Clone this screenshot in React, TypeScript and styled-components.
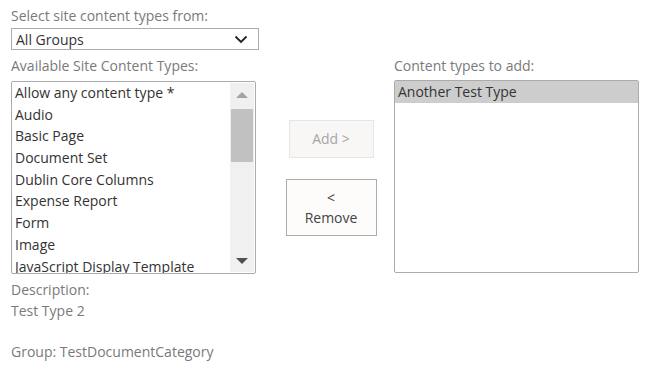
import {createGlobalStyle} from 'styled-components';
import styled from 'styled-components';

const GlobalStyle = createGlobalStyle`
  body {
    margin: 0;
    background: #ffffff;
    font-family: 'Open Sans', 'Noto Sans', sans-serif;
    font-size: 14px;
    color: #444444;
  }
`;

const availableTypes = [
  'Allow any content type *',
  'Audio',
  'Basic Page',
  'Document Set',
  'Dublin Core Columns',
  'Expense Report',
  'Form',
  'Image',
  'JavaScript Display Template',
];

const selectedTypes = ['Another Test Type'];

const Page = styled.div`
  padding: 5px 0 0 11px;
  width: 642px;
  box-sizing: border-box;
`;

const Label = styled.div`
  color: #7a7a7a;
  line-height: 21px;
`;

const Select = styled.div`
  width: 248px;
  height: 22px;
  box-sizing: border-box;
  border: 1px solid #ababab;
  margin-top: 2px;
  display: flex;
  align-items: center;
  justify-content: space-between;
  padding: 0 10px 0 4px;
  color: #333333;
`;

const Row = styled.div`
  display: flex;
  margin-top: 5px;
`;

const Column = styled.div`
  display: flex;
  flex-direction: column;
  width: 245px;
`;

const Middle = styled.div`
  width: 138px;
  box-sizing: border-box;
  display: flex;
  flex-direction: column;
  align-items: center;
  padding: 65px 0 0 12px;
  gap: 21px;
`;

const ListBox = styled.div<{$top: number}>`
  margin-top: ${({$top}) => $top}px;
  height: 193px;
  box-sizing: border-box;
  border: 1px solid #ababab;
  border-radius: 2px;
  display: flex;
  overflow: hidden;
`;

const Items = styled.div`
  flex: 1;
  min-width: 0;
`;

const Item = styled.div<{$selected?: boolean}>`
  height: 21.7px;
  line-height: 21px;
  padding-left: 3px;
  white-space: nowrap;
  color: #333333;
  background: ${({$selected}) => ($selected ? '#cdcdcd' : 'transparent')};
`;

const Scrollbar = styled.div`
  width: 24px;
  margin: 1px 1px 1px 0;
  background: #f0f0f0;
  display: flex;
  flex-direction: column;
  align-items: center;
`;

const Arrow = styled.div<{$down?: boolean}>`
  width: 0;
  height: 0;
  border-left: 6px solid transparent;
  border-right: 6px solid transparent;
  ${({$down}) => ($down ? 'border-top: 6px solid #505050;' : 'border-bottom: 6px solid #a3a3a3;')}
  margin: ${({$down}) => ($down ? 'auto 0 8px' : '9px 0 0')};
`;

const Thumb = styled.div`
  width: 22px;
  height: 53px;
  background: #c1c1c1;
  margin-top: 11px;
`;

const Button = styled.button<{$width: number; $height: number}>`
  width: ${({$width}) => $width}px;
  height: ${({$height}) => $height}px;
  font-family: inherit;
  font-size: 14px;
  line-height: 20px;
  background: #fdfcfb;
  border: 1px solid #ababab;
  color: #444444;
  padding: 0;
  margin: 0;

  &:disabled {
    background: #f8f7f6;
    border-color: #e6e6e6;
    color: #a6a6a6;
  }
`;

const Details = styled.div`
  margin-top: 5px;
  color: #7a7a7a;
  line-height: 21px;
`;

const Spacer = styled.div`
  height: 20px;
`;

const Chevron = () => (
  <svg width="14" height="9" viewBox="0 0 14 9">
    <path d="M1.5 1.5 L7 7 L12.5 1.5" fill="none" stroke="#222" strokeWidth="1.8" />
  </svg>
);

export default function App() {
  return (
    <>
      <GlobalStyle />
      <Page>
        <Label>Select site content types from:</Label>
        <Select>
          <span>All Groups</span>
          <Chevron />
        </Select>
        <Row>
          <Column>
            <Label>Available Site Content Types:</Label>
            <ListBox $top={5}>
              <Items>
                {availableTypes.map((t) => (
                  <Item key={t}>{t}</Item>
                ))}
              </Items>
              <Scrollbar>
                <Arrow />
                <Thumb />
                <Arrow $down />
              </Scrollbar>
            </ListBox>
          </Column>
          <Middle>
            <Button $width={85} $height={38} disabled>
              Add &gt;
            </Button>
            <Button $width={91} $height={57}>
              &lt;
              <br />
              Remove
            </Button>
          </Middle>
          <Column>
            <Label>Content types to add:</Label>
            <ListBox $top={4}>
              <Items>
                {selectedTypes.map((t) => (
                  <Item key={t} $selected>
                    {t}
                  </Item>
                ))}
              </Items>
            </ListBox>
          </Column>
        </Row>
        <Details>
          Description:
          <br />
          Test Type 2
          <Spacer />
          Group: TestDocumentCategory
        </Details>
      </Page>
    </>
  );
}
